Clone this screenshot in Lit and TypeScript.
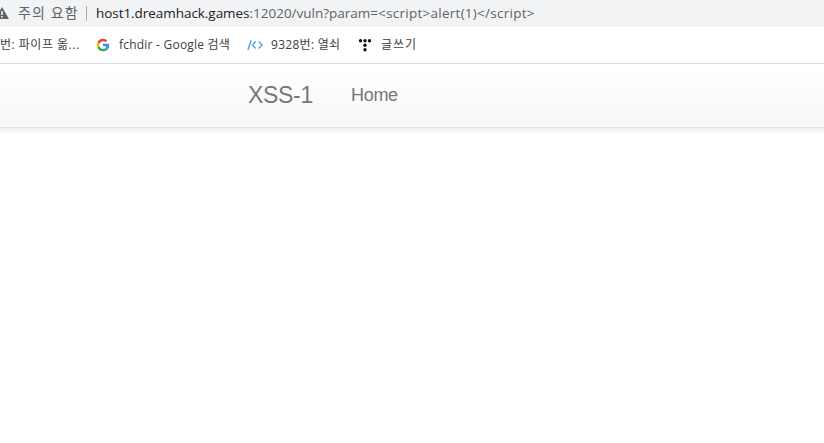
import { LitElement, html, css } from "lit";
import { customElement } from "lit/decorators.js";

@customElement("address-bar")
export class AddressBar extends LitElement {
  static styles = css`
    :host {
      display: flex;
      align-items: center;
      box-sizing: border-box;
      height: 27px;
      background: #f1f3f4;
      color: #5f6368;
      font-family: "Open Sans", "Noto Sans CJK KR", sans-serif;
      font-size: 13.5px;
      line-height: 24px;
      padding-bottom: 2px;
      white-space: pre;
    }
    .warning {
      flex: none;
      width: 14px;
      height: 12px;
      margin: 1px 9px 0 -5px;
    }
    .status {
      width: 63px;
      font-size: 14px;
      letter-spacing: 1.1px;
    }
    .divider {
      width: 1px;
      height: 15px;
      margin: 1px 9px 0 5px;
      background: #a9acb0;
    }
    .url {
      letter-spacing: 0;
    }
    .host {
      color: #202124;
      letter-spacing: -0.05px;
    }
    .markup {
      letter-spacing: 0.26px;
    }
  `;

  render() {
    return html`
      <svg class="warning" viewBox="0 0 14 12">
        <path fill="#5f6368" fill-rule="evenodd" d="M7 0 14 12H0ZM6.200 4v4h1.600V4ZM6.200 9v1.600h1.600V9Z" />
      </svg>
      <span class="status">주의 요함</span>
      <span class="divider"></span>
      <span class="url"><span class="host">host1.dreamhack.games</span>:12020/vuln?param=<span class="markup">&lt;script&gt;alert(1)&lt;/script&gt;</span></span>
    `;
  }
}

@customElement("bookmark-bar")
export class BookmarkBar extends LitElement {
  static styles = css`
    :host {
      display: flex;
      align-items: center;
      box-sizing: border-box;
      height: 37px;
      padding-bottom: 1px;
      border-bottom: 1px solid #dadce0;
      background: #fff;
      color: #3c4043;
      font-family: "Open Sans", "Noto Sans CJK KR", sans-serif;
      font-size: 12px;
      white-space: pre;
    }
    span {
      flex: none;
      padding-bottom: 2px;
    }
    svg {
      flex: none;
      width: 16px;
      height: 16px;
    }
    .cut {
      width: 95px;
      letter-spacing: 0.5px;
    }
    .search {
      width: 128px;
      margin-left: 8px;
      letter-spacing: 0.22px;
    }
    .problem {
      width: 86px;
      margin-left: 8px;
      letter-spacing: 0.28px;
    }
    .write {
      margin-left: 8px;
      letter-spacing: 1px;
    }
  `;

  render() {
    return html`
      <span class="cut">번: 파이프 옮...</span>
      <svg viewBox="0 0 48 48">
        <path fill="#ea4335" d="M24 13c3 0 5.400 1 7.300 2.800l5.500-5.500C33.400 7.100 29 5 24 5 16.600 5 10.200 9.300 7 15.500l6.400 5C14.900 16.100 19.100 13 24 13Z" />
        <path fill="#4285f4" d="M42.500 24.400c0-1.400-.1-2.700-.4-3.900H24v7.500h10.400c-.5 2.400-1.900 4.400-3.900 5.800l6.200 4.800c3.700-3.400 5.800-8.400 5.800-14.200Z" />
        <path fill="#fbbc05" d="M13.400 27.500a11 11 0 0 1 0-7l-6.400-5a19 19 0 0 0 0 17Z" />
        <path fill="#34a853" d="M24 43c5.100 0 9.400-1.700 12.700-4.500l-6.200-4.800C28.800 34.900 26.600 35.500 24 35.500c-4.900 0-9.100-3.300-10.600-8L7 32.500C10.200 38.700 16.600 43 24 43Z" />
      </svg>
      <span class="search">fchdir - Google 검색</span>
      <svg viewBox="0 0 16 16" fill="none" stroke="#4aa3df" stroke-width="1.300">
        <path d="M4.200 3 .9 13M8.700 4.500 5.500 8l3.200 3.500M11.700 4.500 15 8l-3.300 3.500" />
      </svg>
      <span class="problem">9328번: 열쇠</span>
      <svg viewBox="0 0 16 16" fill="#111">
        <circle cx="3.500" cy="3.700" r="1.700" />
        <circle cx="8" cy="3.700" r="1.700" />
        <circle cx="12.500" cy="3.700" r="1.700" />
        <circle cx="8" cy="8.200" r="1.700" />
        <circle cx="8" cy="12.700" r="1.700" />
      </svg>
      <span class="write">글쓰기</span>
    `;
  }
}

@customElement("site-nav")
export class SiteNav extends LitElement {
  /* wider than the page, so the shadow does not fade at its sides */
  static styles = css`
    :host {
      display: flex;
      align-items: center;
      box-sizing: border-box;
      height: 64px;
      margin: 0 -12px;
      padding-left: 260px;
      border-bottom: 1px solid #e4e4e4;
      background: linear-gradient(#fff, #f8f8f8);
      box-shadow: 0 1px 8px rgba(0, 0, 0, 0.1);
      clip-path: inset(0 0 -12px);
      font-family: "Liberation Sans", Arial, sans-serif;
      color: #777;
    }
    .brand {
      width: 103px;
      font-size: 23px;
      letter-spacing: -0.3px;
    }
    .link {
      font-size: 18px;
      letter-spacing: -0.3px;
    }
  `;

  render() {
    return html`
      <span class="brand">XSS-1</span>
      <span class="link">Home</span>
    `;
  }
}

@customElement("app-root")
export class AppRoot extends LitElement {
  static styles = css`
    :host {
      display: block;
      height: 443px;
      overflow: hidden;
      background: #fff;
    }
  `;

  render() {
    return html`
      <address-bar></address-bar>
      <bookmark-bar></bookmark-bar>
      <site-nav></site-nav>
    `;
  }
}
